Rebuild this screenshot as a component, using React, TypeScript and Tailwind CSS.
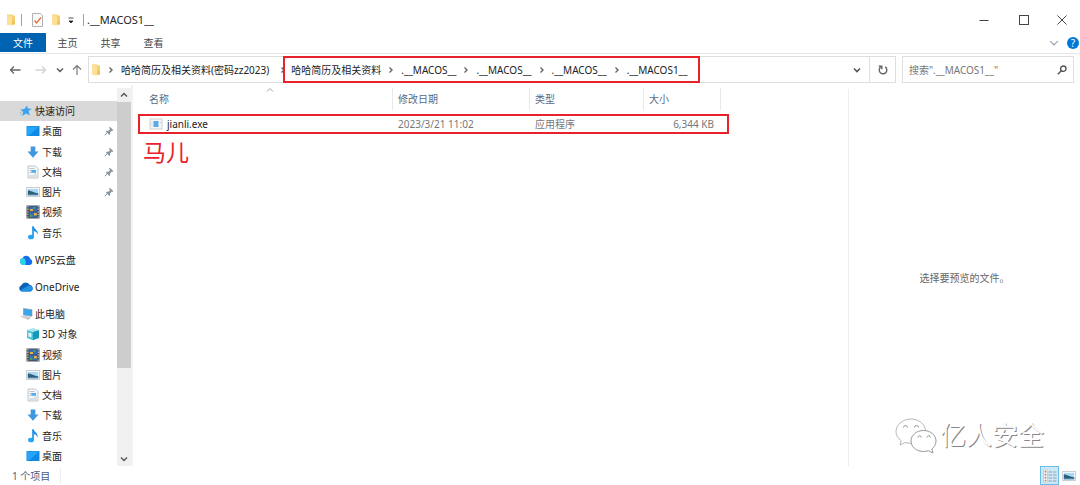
import React from "react"
import clsx from "clsx"

type IconName =
  | "star"
  | "desktop"
  | "download"
  | "document"
  | "picture"
  | "video"
  | "music"
  | "wps"
  | "onedrive"
  | "pc"
  | "cube"

interface NavItem {
  label: string
  icon: IconName
  root?: boolean
  active?: boolean
  pinned?: boolean
}

const navItems: NavItem[] = [
  { label: "快速访问", icon: "star", root: true, active: true },
  { label: "桌面", icon: "desktop", pinned: true },
  { label: "下载", icon: "download", pinned: true },
  { label: "文档", icon: "document", pinned: true },
  { label: "图片", icon: "picture", pinned: true },
  { label: "视频", icon: "video" },
  { label: "音乐", icon: "music" },
  { label: "WPS云盘", icon: "wps", root: true },
  { label: "OneDrive", icon: "onedrive", root: true },
  { label: "此电脑", icon: "pc", root: true },
  { label: "3D 对象", icon: "cube" },
  { label: "视频", icon: "video" },
  { label: "图片", icon: "picture" },
  { label: "文档", icon: "document" },
  { label: "下载", icon: "download" },
  { label: "音乐", icon: "music" },
  { label: "桌面", icon: "desktop" },
]

const crumbs = ["哈哈简历及相关资料", ".__MACOS__", ".__MACOS__", ".__MACOS__", ".__MACOS1__"]

const iconShapes: Record<IconName, React.ReactNode> = {
  star: (
    <>
      <path d="M8 1.500l.8 3 4 .2-3.200 2.400 1 4.400-3.500-2.100L3.300 12l.9-4L1.500 5.500l3.900-.5z" fill="#3ba3ee" />
      <path d="M.5 8.500l2.500-.5M1 11l2-1.500" stroke="#8ccaf5" />
    </>
  ),
  desktop: (
    <>
      <rect x="0.5" y="2" width="13" height="10" rx="0.5" fill="#1089e4" />
      <path d="M1 2.500h12L3 11.500H1z" fill="#23a5fb" />
    </>
  ),
  download: <path d="M4.700 1.500h4.600v5h3.200L7 12.700 1.500 6.500h3.200z" fill="#3f97df" />,
  document: (
    <>
      <path d="M2 1h7.500L12 3.500V13H2z" fill="#f4f6f8" stroke="#b4bbc1" strokeWidth="0.8" />
      <path d="M3.500 3.500h5M3.500 5.500h1.500M3.500 7.500h1.500M8.500 9h2M3.500 11h7" stroke="#9db1c0" strokeWidth="0.7" />
      <rect x="5.300" y="5" width="4.700" height="2.800" fill="#4faee6" />
    </>
  ),
  picture: (
    <>
      <rect x="0.5" y="2.500" width="13" height="9" fill="#fff" stroke="#c6cbd0" strokeWidth="0.9" />
      <rect x="1.800" y="3.800" width="10.400" height="6.400" fill="#a8d8f5" />
      <path d="M1.800 5.500c3 0 5 2 10.400 2.700v2H1.800z" fill="#2c5f78" />
      <path d="M1.800 9.200h10.400v1H1.800z" fill="#5189b7" />
    </>
  ),
  video: (
    <>
      <rect x="0.5" y="0.5" width="13" height="13" fill="#4c5056" />
      <path d="M1.800 1v12M12.200 1v12" stroke="#c3c6ca" strokeWidth="1.200" strokeDasharray="1.300 1.300" />
      <rect x="3.200" y="1.500" width="7.600" height="5" fill="#3569bd" />
      <rect x="3.200" y="7.300" width="7.600" height="5" fill="#3569bd" />
      <path d="M4 4h3v2H4zM8 8h2.800v2.500H8z" fill="#e2b23a" />
      <path d="M7.500 2h2v2h-2zM4 9.500h2.500v2.500H4z" fill="#3fa069" />
    </>
  ),
  music: (
    <>
      <path d="M7 .5v10.500" stroke="#168ee5" strokeWidth="1.600" />
      <path d="M6.300.5h1.500c.2 2.800 4.800 3.500 3.800 8.300-.6-2.400-2-3.500-3.800-3.800z" fill="#168ee5" />
      <ellipse cx="5" cy="11" rx="3" ry="2.300" fill="#26a5f5" />
    </>
  ),
  wps: (
    <>
      <path d="M4 12a3.500 3.500 0 0 1-.6-6.800A4.300 4.300 0 0 1 11.400 6 3.200 3.200 0 0 1 11 12z" fill="#176df0" />
      <path d="M4 12a3.500 3.500 0 0 1-.6-6.800C6 4.500 7.500 8 6.500 12z" fill="#29d7df" />
    </>
  ),
  onedrive: (
    <>
      <path d="M3 11.500A3.200 3.200 0 0 1 2.400 5.300 4.600 4.600 0 0 1 10.800 5 3.300 3.300 0 0 1 11 11.500z" fill="#0b63b8" />
      <path d="M3 11.500c-1.500 0-2.200-1-2.200-1L8 6.500c3-2.500 6 0 5.700 2.500-.2 1.500-1.300 2.500-2.700 2.500z" fill="#2293e2" />
    </>
  ),
  pc: (
    <>
      <path d="M4.500 1.500l8.500 1.200v6.500L4.500 8z" fill="#3aa5e9" stroke="#86939d" strokeWidth="0.6" />
      <path d="M1 9.500l3.500-1 7 1.500-3 2.500z" fill="#c8ced2" />
      <path d="M8.500 12.500l3-2.500" stroke="#7f8b94" strokeWidth="0.7" />
    </>
  ),
  cube: (
    <>
      <path d="M1 3l6-2 6 2-6 2z" fill="#a4e7ef" />
      <path d="M1 3l6 2v8.300L1 11z" fill="#49c4d9" />
      <path d="M13 3L7 5v8.300L13 11z" fill="#1699b8" />
      <path d="M2.300 5.500L5.500 6.500v4L2.300 9.500z" fill="#d7f6f8" />
    </>
  ),
}

const ItemIcon = ({ name }: { name: IconName }) => (
  <svg viewBox="0 0 14 14" fill="none" className="size-3.5 shrink-0">
    {iconShapes[name]}
  </svg>
)

const Folder = () => (
  <svg viewBox="0 0 10 12" className="h-3 w-2.5 shrink-0">
    <path d="M1 .5h5l.7 1H9V10.500H1z" fill="#f5d072" />
    <path d="M1 .5L6 2v9.800L1 10.500z" fill="#fde095" />
    <path d="M7.500 6.500H9V10.500H6V9z" fill="#efc25a" />
  </svg>
)

interface ChevronProps {
  direction?: "up" | "down" | "right"
  className?: string
}

const Chevron = ({ direction = "down", className }: ChevronProps) => (
  <svg viewBox="0 0 8 8" fill="none" stroke="currentColor" className={clsx("size-2 shrink-0", className)}>
    {direction === "down" && <path d="M1 2.500l3 3 3-3" />}
    {direction === "up" && <path d="M1 5.500l3-3 3 3" />}
    {direction === "right" && <path d="M2.500 1.500L5 4 2.500 6.500" />}
  </svg>
)

const TitleBar = () => (
  <header className="flex h-[33px] items-center pt-1.5 pl-1.5">
    <Folder />
    <span className="ml-[5px] h-3 w-px bg-gray-400" />
    <button type="button" aria-label="属性" className="ml-2.5">
      <svg viewBox="0 0 11 14" fill="none" className="h-3.5 w-[11px]">
        <path d="M.5.5h8l2 2v11H.5z" fill="#fafafa" stroke="#aeb3b8" />
        <path d="M2.500 7.500l2 2.500 4.500-5.500" stroke="#e4703a" strokeWidth="1.400" />
      </svg>
    </button>
    <button type="button" aria-label="新建文件夹" className="ml-2">
      <Folder />
    </button>
    <button type="button" aria-label="自定义快速访问工具栏" className="ml-1.5">
      <svg viewBox="0 0 8 8" className="size-2">
        <path d="M1.500 2h5M2 5h4L4 7z" fill="#222" stroke="#222" strokeWidth="0.8" />
      </svg>
    </button>
    <span className="ml-2 h-3 w-px bg-gray-400" />
    <h1 className="ml-[3px] flex-1 text-[11px] leading-4">.__MACOS1__</h1>
    <button type="button" aria-label="最小化" className="flex w-10 justify-center">
      <svg viewBox="0 0 10 10" stroke="#444" className="size-2.5">
        <path d="M.5 5.500h9" />
      </svg>
    </button>
    <button type="button" aria-label="最大化" className="flex w-10 justify-center">
      <svg viewBox="0 0 10 10" fill="none" stroke="#444" className="size-2.5">
        <rect x="0.5" y="0.5" width="9" height="9" />
      </svg>
    </button>
    <button type="button" aria-label="关闭" className="flex w-9 justify-center">
      <svg viewBox="0 0 10 10" stroke="#444" className="size-2.5">
        <path d="M.5.5l9 9M9.500.5l-9 9" />
      </svg>
    </button>
  </header>
)

const Ribbon = () => (
  <div className="flex h-[21px] items-center border-b border-[#e6e6e6] text-[#444]">
    <button type="button" className="h-[19px] w-[46px] self-start bg-[#0063b1] text-white">
      文件
    </button>
    {["主页", "共享", "查看"].map((tab) => (
      <button key={tab} type="button" className="w-[43px]">
        {tab}
      </button>
    ))}
    <button type="button" aria-label="展开功能区" className="ml-auto text-gray-400">
      <Chevron className="size-2.5" />
    </button>
    <button
      type="button"
      aria-label="帮助"
      className="mr-px ml-2 flex size-3 items-center justify-center rounded-full bg-[#0078d7] text-[10px] text-white"
    >
      ?
    </button>
  </div>
)

const AddressBar = () => (
  <div className="flex h-[31px] items-center pr-1.5 pl-2">
    <div className="flex w-20 items-center text-[#555]">
      <button type="button" aria-label="后退">
        <svg viewBox="0 0 14 12" fill="none" stroke="#666" strokeWidth="1.300" className="h-3 w-3.5">
          <path d="M12.500 6h-10M6 2.500L2.500 6 6 9.500" />
        </svg>
      </button>
      <button type="button" aria-label="前进" className="ml-3">
        <svg viewBox="0 0 14 12" fill="none" stroke="#d2d2d2" strokeWidth="1.300" className="h-3 w-3.5">
          <path d="M1.500 6h10M8 2.500L11.500 6 8 9.500" />
        </svg>
      </button>
      <button type="button" aria-label="最近浏览的位置" className="ml-2">
        <Chevron className="stroke-[1.4]" />
      </button>
      <button type="button" aria-label="上移" className="ml-2">
        <svg viewBox="0 0 10 12" fill="none" stroke="#777" strokeWidth="1.200" className="h-3 w-2.5">
          <path d="M5 11V1.500M1 5.500l4-4 4 4" />
        </svg>
      </button>
    </div>
    <nav className="flex h-[27px] min-w-0 flex-1 items-center border border-[#dedede] pl-0.5 text-[#222]">
      <Folder />
      <Chevron direction="right" className="mx-1.5 stroke-[1.4] text-[#666]" />
      <a href="#" className="whitespace-nowrap">
        哈哈简历及相关资料(密码zz2023)
      </a>
      <Chevron direction="right" className="ml-2.5 stroke-[1.4] text-[#666]" />
      <div className="-ml-1 flex h-[27px] items-center border-2 border-[#e8212b] pr-2.5 pl-1.5">
        {crumbs.map((crumb, i) => (
          <React.Fragment key={i}>
            {i > 0 && <Chevron direction="right" className="mx-1.5 stroke-[1.4] text-[#666]" />}
            <a href="#" className="whitespace-nowrap">
              {crumb}
            </a>
          </React.Fragment>
        ))}
      </div>
      <button type="button" aria-label="以前的位置" className="mr-2 ml-auto text-[#555]">
        <Chevron className="stroke-[1.6]" />
      </button>
      <button
        type="button"
        aria-label="刷新"
        className="flex h-full w-[26px] items-center justify-center border-l border-[#dedede]"
      >
        <svg viewBox="0 0 10 10" fill="none" stroke="#666" strokeWidth="1.400" className="size-2.5">
          <path d="M7.200 1.900a3.800 3.800 0 1 1-4.600.2M.8 1.200h3v3" />
        </svg>
      </button>
    </nav>
    <label className="ml-1.5 flex h-[27px] w-[172px] items-center border border-[#dedede] px-1.5">
      <input
        type="search"
        aria-label="搜索"
        placeholder={'搜索".__MACOS1__"'}
        className="min-w-0 flex-1 outline-none placeholder:text-[#777]"
      />
      <svg viewBox="0 0 10 10" fill="none" stroke="#555" strokeWidth="1.400" className="size-2.5">
        <circle cx="6.300" cy="3.700" r="2.700" />
        <path d="M4.300 5.700L.8 9.200" />
      </svg>
    </label>
  </div>
)

const Sidebar = () => (
  <aside className="flex w-[133px] shrink-0 border-r-2 border-[#f3f3f3]">
    <ul className="flex flex-1 flex-col pt-4">
      {navItems.map((item, i) => (
        <li
          key={i}
          className={clsx(
            "flex min-h-5 flex-1 items-center",
            item.root ? "pl-[19px]" : "pl-[26px]",
            item.root && !item.active && "mt-[7px]",
            item.active && "bg-[#d9d9d9]"
          )}
        >
          <a href="#" className="flex items-center gap-0.5 whitespace-nowrap">
            <ItemIcon name={item.icon} />
            {item.label}
          </a>
          {item.pinned && (
            <svg viewBox="0 0 10 10" className="mr-[3px] ml-auto size-2.5">
              <path d="M5.800.8l3.500 3.300-1 .8-.6-.2-1.600 1.700.1 1.700-.9.8L1.800 5.500l.9-.8 1.700.1L6 3.200l-.9-1.500z" fill="#8a959e" />
              <path d="M3.500 6.500L.8 9.200" stroke="#8a959e" />
            </svg>
          )}
        </li>
      ))}
    </ul>
    <div className="mt-[3px] flex w-3.5 flex-col bg-[#f0f0f0] text-[#555]">
      <button type="button" aria-label="向上滚动" className="flex h-3.5 items-center justify-center">
        <Chevron direction="up" className="stroke-[1.4]" />
      </button>
      <div className="flex-1">
        <div className="h-[76%] bg-[#cdcdcd]" />
      </div>
      <button type="button" aria-label="向下滚动" className="flex h-3.5 items-center justify-center">
        <Chevron className="stroke-[1.4]" />
      </button>
    </div>
  </aside>
)

const headings = [
  { label: "名称", width: "w-[255px]", pad: "pl-[11px]" },
  { label: "修改日期", width: "w-[137px]", pad: "pl-[5px]" },
  { label: "类型", width: "w-[114px]", pad: "pl-[5px]" },
  { label: "大小", width: "w-[77px]", pad: "pl-[5px]" },
]

const FileList = () => (
  <main className="min-w-0 flex-1 pt-[3px] pl-[5px]">
    <table className="w-[591px] table-fixed border-separate border-spacing-0 text-left text-[#777]">
      <thead className="text-[#5a6a84]">
        <tr>
          {headings.map(({ label, width, pad }) => (
            <th key={label} className={clsx("relative p-0 pb-1 font-normal", width)}>
              <div className={clsx("flex h-[22px] items-center border-r border-[#e8e8e8]", pad)}>{label}</div>
              {label === "名称" && (
                <Chevron direction="up" className="absolute -top-0.5 left-1/2 text-gray-400" />
              )}
            </th>
          ))}
          <th className="p-0" />
        </tr>
      </thead>
      <tbody>
        <tr className="h-5 outline-2 -outline-offset-2 outline-[#e8212b]">
          <td className="p-0 pl-[11px]">
            <a href="#" className="flex items-center gap-1 text-[#222]">
              <svg viewBox="0 0 14 12" className="h-3 w-3.5">
                <rect x="1" y="1" width="12" height="10" fill="#f6f6f6" stroke="#ccd0d3" />
                <rect x="4.500" y="3" width="5" height="6" fill="#5ca9e6" />
                <path d="M2.500 3.500h1M2.500 5.500h1M2.500 7.500h1M11 4.500h1" stroke="#b9c4cc" />
              </svg>
              jianli.exe
            </a>
          </td>
          <td className="p-0 pl-[5px]">2023/3/21 11:02</td>
          <td className="p-0 pl-[5px]">应用程序</td>
          <td className="p-0 pr-[7px] text-right">6,344 KB</td>
          <td className="p-0" />
        </tr>
      </tbody>
    </table>
    <p className="pl-[5px] pt-0.5 text-[23px] leading-8 text-[#e8212b]">马儿</p>
  </main>
)

const Watermark = () => (
  <div className="absolute right-9 bottom-3 flex items-center gap-0.5">
    <svg viewBox="0 0 44 38" fill="#fff" stroke="#999" className="h-[38px] w-11">
      <path
        d="M17 3C9 3 2 8.500 2 15.500c0 4 2 7 5.200 9.200L6 29l5-2.500c2 .6 4 .8 6.500.8C26 27 31.500 21.500 31.500 15S25 3 17 3z"
        strokeWidth="0.7"
      />
      <path d="M29.500 14.500c-7 0-12.500 4.600-12.500 10.500s5.500 10.500 12.500 10.500c1.700 0 3.300-.3 4.700-.8l4.800 2.300-1.200-4c2.700-2 4.200-4.800 4.200-8 0-5.900-5.500-10.500-12.500-10.500z" />
      <path
        d="M9.500 11.500a2 2 0 0 1 4 0M20.500 11.500a2 2 0 0 1 4 0M24 21.500a1.700 1.700 0 0 1 3.400 0M33 21.500a1.700 1.700 0 0 1 3.400 0"
        fill="none"
      />
    </svg>
    <span className="text-[26px] leading-8 text-white [text-shadow:1px_1px_0_#888]">亿人安全</span>
  </div>
)

const StatusBar = () => (
  <footer className="flex h-[19px] items-center pr-1 pl-3 text-[#4c5d80]">
    <span className="border-r border-[#eee] pr-2.5">1 个项目</span>
    <button
      type="button"
      aria-label="详细信息"
      className="ml-auto flex h-[19px] w-[19px] items-center justify-center border border-[#66bfe8] bg-[#cce8f6]"
    >
      <svg viewBox="0 0 14 14" className="size-3.5">
        <rect x="0.5" y="1" width="4" height="12" fill="#eee" stroke="#b9b9b9" strokeWidth="0.5" />
        <path d="M2.500 2v10" stroke="#c27a62" strokeWidth="1.500" strokeDasharray="1.500 1.500" />
        <path d="M5.500 3h8M5.500 6h8M5.500 9h8M5.500 12h8" stroke="#8fa0ab" strokeDasharray="3.500 1" />
      </svg>
    </button>
    <button type="button" aria-label="大缩略图" className="ml-[3px]">
      <ItemIcon name="picture" />
    </button>
  </footer>
)

const App = () => {
  return (
    <div className="flex min-h-screen flex-col bg-white font-['Noto_Sans','Noto_Sans_CJK_SC',sans-serif] text-[10px] leading-4 text-[#222]">
      <TitleBar />
      <Ribbon />
      <AddressBar />
      <div className="flex flex-1">
        <Sidebar />
        <FileList />
        <section className="relative mt-1 flex w-[232px] shrink-0 items-center justify-center border-l border-[#eee] text-[#666]">
          选择要预览的文件。
          <Watermark />
        </section>
      </div>
      <StatusBar />
    </div>
  )
}

export default App
